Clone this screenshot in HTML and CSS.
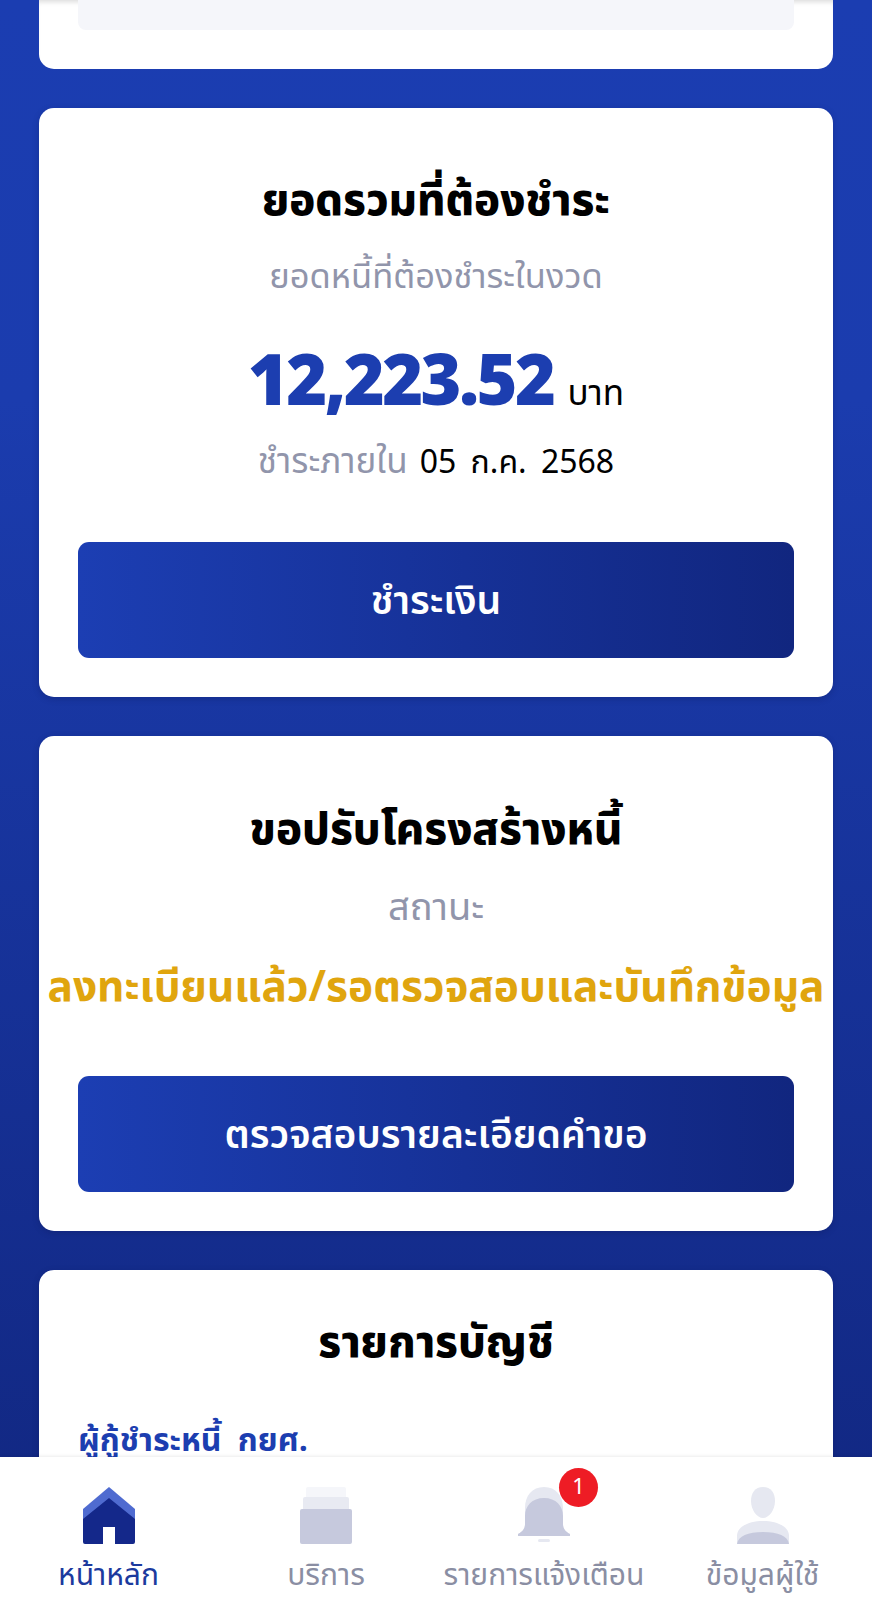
FILE: index.html
```html
<!DOCTYPE html>
<html lang="th">
<head>
<meta charset="utf-8">
<title>หน้าหลัก</title>
<link rel="stylesheet" href="styles.css">
</head>
<body>
<div class="screen">
  <main class="content">
    <section class="card card-cut">
      <div class="inner-box"></div>
    </section>
    <section class="card card-pay">
      <h2 class="title">ยอดรวมที่ต้องชำระ</h2>
      <p class="sub">ยอดหนี้ที่ต้องชำระในงวด</p>
      <p class="amount-row"><span class="amount">12,223.52</span><span class="unit">บาท</span></p>
      <p class="due"><span class="due-label">ชำระภายใน</span><span class="due-date">05 ก.ค. 2568</span></p>
      <button class="btn">ชำระเงิน</button>
    </section>
    <section class="card card-debt">
      <h2 class="title">ขอปรับโครงสร้างหนี้</h2>
      <p class="sub status-label">สถานะ</p>
      <p class="status">ลงทะเบียนแล้ว/รอตรวจสอบและบันทึกข้อมูล</p>
      <button class="btn">ตรวจสอบรายละเอียดคำขอ</button>
    </section>
    <section class="card card-list">
      <h2 class="title">รายการบัญชี</h2>
      <p class="acct">ผู้กู้ชำระหนี้ กยศ.</p>
    </section>
  </main>
  <nav class="tabbar">
    <a class="tab tab-active">
      <svg class="icon" width="54" height="60" viewBox="0 0 54 60"><path fill="#4f6bd0" d="M27 1 L53 23 V36 H1 V23 Z"/><path fill="#14288a" fill-rule="evenodd" d="M27 12 L53 33 V56 a2 2 0 0 1-2 2 H33 V41 H21 V58 H3 a2 2 0 0 1-2-2 V33 Z"/></svg>
      <span class="tab-label">หน้าหลัก</span>
    </a>
    <a class="tab">
      <svg class="icon" width="54" height="60" viewBox="0 0 54 60"><rect x="7" y="1" width="40" height="14" rx="2" fill="#f5f6fa"/><rect x="4" y="11" width="46" height="14" rx="2" fill="#e8eaf2"/><rect x="1" y="23" width="52" height="35" rx="2" fill="#c6c9dd"/></svg>
      <span class="tab-label">บริการ</span>
    </a>
    <a class="tab">
      <span class="icon-wrap">
        <svg class="icon" width="54" height="60" viewBox="0 0 54 60"><path fill="#e6e8f1" d="M27 1 C15 1 8 10 8 22 V38 C8 43 5 46 1 48 V50 H53 V48 C49 46 46 43 46 38 V22 C46 10 39 1 27 1Z"/><path fill="#c6c9dd" d="M27 12 C15 12 8 20 8 30 V38 C8 43 5 46 1 48 V50 H53 V48 C49 46 46 43 46 38 V30 C46 20 39 12 27 12Z"/><rect x="21" y="53" width="12" height="3" rx="1.5" fill="#e6e8f1"/></svg>
        <span class="badge">1</span>
      </span>
      <span class="tab-label">รายการแจ้งเตือน</span>
    </a>
    <a class="tab">
      <svg class="icon" width="54" height="60" viewBox="0 0 54 60"><path fill="#e6e8f1" d="M27 1 C35 1 39 7 39 15 C39 24 33 32 27 32 C21 32 15 24 15 15 C15 7 19 1 27 1Z"/><path fill="#e6e8f1" d="M1 58 V50 C1 41 12 35 27 35 C42 35 53 41 53 50 V58Z"/><path fill="#c6c9dd" d="M1 58 C2 50 12 46 27 46 C42 46 52 50 53 58Z"/></svg>
      <span class="tab-label">ข้อมูลผู้ใช้</span>
    </a>
  </nav>
</div>
</body>
</html>
```

FILE: styles.css
```css
* { box-sizing: border-box; }
html, body { margin: 0; padding: 0; }
body {
  font-family: "Noto Sans Thai", "Noto Sans Thai Looped", "Noto Sans", "DejaVu Sans", sans-serif;
}
.screen {
  position: relative;
  width: 872px;
  height: 1600px;
  overflow: hidden;
  background: linear-gradient(180deg, #1b3db1 0%, #1b3cae 25%, #11267f 100%);
}
.content {
  display: flex;
  flex-direction: column;
  gap: 39px;
  padding: 0 39px;
}
.card {
  background: #fff;
  border-radius: 15px;
  padding: 0 39px;
  text-align: center;
  box-shadow: 0 2px 6px rgba(10, 20, 70, .25);
}
.card p, .card h2 { margin: 0; }
.card-cut {
  height: 69px;
  border-radius: 0 0 15px 15px;
  box-shadow: inset 0 5px 5px -3px rgba(0, 0, 0, .14);
}
.inner-box {
  height: 30px;
  background: #f5f6fa;
  border-radius: 0 0 8px 8px;
}
.card-pay { height: 589px; padding-top: 69px; }
.card-debt { height: 495px; padding-top: 70px; }
.card-list { height: 300px; padding-top: 49px; }
.title {
  font-size: 43.5px;
  line-height: 50px;
  font-weight: 800;
  color: #000;
}
.sub {
  font-size: 34.5px;
  line-height: 40px;
  margin-top: 31px !important;
  color: #9195ab;
}
.card-debt .status-label { margin-top: 33px !important; font-size: 38px; }
.amount-row {
  display: flex;
  justify-content: center;
  align-items: baseline;
  gap: 14px;
  margin-top: 41px !important;
  line-height: 90px;
}
.amount {
  font-size: 70px;
  font-weight: 900;
  color: #1c3eb0;
  letter-spacing: -2.6px;
}
.unit {
  font-size: 35px;
  color: #000;
}
.due {
  display: flex;
  justify-content: center;
  align-items: baseline;
  gap: 12px;
  line-height: 40px;
  margin-top: 3px !important;
}
.due-label { color: #9195ab; font-size: 35px; }
.due-date { color: #000; font-size: 32px; word-spacing: 6px; }
.btn {
  display: block;
  width: 100%;
  height: 116px;
  border: 0;
  border-radius: 11px;
  padding: 4px 0 0;
  background: linear-gradient(90deg, #1c3eb3 0%, #11267f 100%);
  color: #fff;
  font-family: inherit;
  font-size: 39px;
  font-weight: 600;
}
.card-pay .btn { margin-top: 59px; }
.card-debt .btn { margin-top: 63px; }
.status {
  font-size: 42.4px;
  line-height: 50px;
  font-weight: 700;
  color: #e0a50e;
  margin: 34px -39px 0 !important;
  white-space: nowrap;
}
.acct {
  text-align: left;
  font-size: 32px;
  line-height: 40px;
  font-weight: 700;
  color: #1c3eb0;
  margin-top: 52px !important;
  word-spacing: 8px;
}
.tabbar {
  position: absolute;
  left: 0;
  right: 0;
  bottom: 0;
  height: 143px;
  z-index: 2;
  display: grid;
  grid-template-columns: 217px 218px 218px 219px;
  background: #fff;
  box-shadow: 0 -1px 3px rgba(0, 0, 0, .08);
}
.tab {
  display: flex;
  flex-direction: column;
  align-items: center;
  padding-top: 29px;
}
.icon { display: block; overflow: visible; }
.icon-wrap { position: relative; display: block; }
.tab-label {
  margin-top: 11px;
  font-size: 30px;
  line-height: 38px;
  color: #8a8ea3;
  white-space: nowrap;
}
.tab-active .tab-label { color: #1c3a9e; }
.badge {
  position: absolute;
  left: 42px;
  top: -18px;
  width: 39px;
  height: 39px;
  border-radius: 50%;
  background: #ee1c25;
  color: #fff;
  font-size: 22px;
  line-height: 39px;
  text-align: center;
}
```
